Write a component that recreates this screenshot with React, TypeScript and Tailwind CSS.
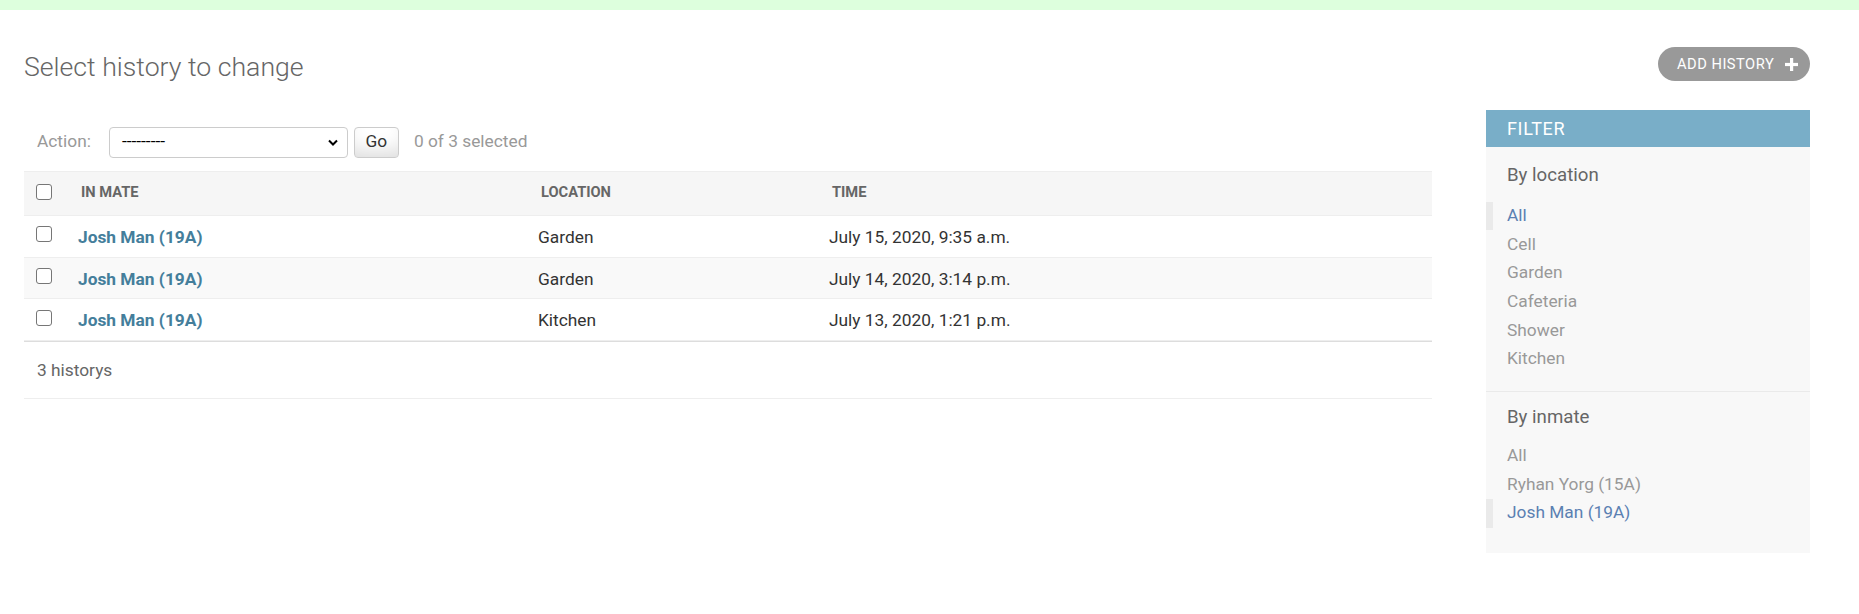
export default function App() {
  const rows = [
    { loc: "Garden", time: "July 15, 2020, 9:35 a.m.", bg: "bg-white" },
    { loc: "Garden", time: "July 14, 2020, 3:14 p.m.", bg: "bg-[#f9f9f9]" },
    { loc: "Kitchen", time: "July 13, 2020, 1:21 p.m.", bg: "bg-white" },
  ];
  const locs = [
    { t: "All", sel: true },
    { t: "Cell", sel: false },
    { t: "Garden", sel: false },
    { t: "Cafeteria", sel: false },
    { t: "Shower", sel: false },
    { t: "Kitchen", sel: false },
  ];
  const inmates = [
    { t: "All", sel: false },
    { t: "Ryhan Yorg (15A)", sel: false },
    { t: "Josh Man (19A)", sel: true },
  ];
  const Check = () => (
    <div className="w-[16px] h-[16px] mb-[4px] rounded-[3px] border border-[#767676] bg-white" />
  );
  const Item = ({ t, sel }: { t: string; sel: boolean }) => (
    <li
      className={
        sel
          ? "h-[28.7px] flex items-center border-l-[7px] border-[#eaeaea] pl-[14px] text-[#5b80b2]"
          : "h-[28.7px] flex items-center pl-[21px] text-[#999]"
      }
    >
      {t}
    </li>
  );
  return (
    <div className="min-h-[614px] bg-white font-['Roboto',sans-serif] text-[#333]">
      <div className="h-[10px] bg-[#ddffdd]" />
      <div className="flex pl-[24px] pr-[49px]">
        <div className="flex-1 min-w-0">
          <h1 className="pt-[41px] text-[26.67px] leading-[32px] font-light text-[#666]">
            Select history to change
          </h1>
          <div className="mt-[30px] h-[58px] flex items-center pl-[13px] text-[17.33px] text-[#999]">
            <span>Action:</span>
            <div className="ml-[18px] w-[239px] h-[31px] border border-[#ccc] rounded-[4px] bg-white flex items-center justify-between pl-[12px] pr-[9px] text-black">
              <span>---------</span>
              <svg width="10" height="7" viewBox="0 0 10 7">
                <path d="M1 1.5 L5 5.5 L9 1.5" fill="none" stroke="#000" strokeWidth="2" />
              </svg>
            </div>
            <div className="ml-[6px] w-[45px] h-[31px] border border-[#ccc] rounded-[4px] bg-white shadow-[inset_0_-15px_20px_-10px_rgba(0,0,0,0.15)] flex items-center justify-center text-[#333]">
              Go
            </div>
            <span className="ml-[15px]">0 of 3 selected</span>
          </div>
          <div className="border-t border-[#eee]">
            <div className="grid grid-cols-[44px_460px_291px_1fr] h-[44px] pb-[3px] bg-[#f6f6f6] border-b border-[#eee] items-center text-[14.67px] font-bold uppercase text-[#666]">
              <div className="pl-[12px] pt-[3px] flex items-center">
                <Check />
              </div>
              <div className="pl-[13px]">In mate</div>
              <div className="pl-[13px]">Location</div>
              <div className="pl-[13px]">Time</div>
            </div>
            {rows.map((r, i) => (
              <div
                key={i}
                className={`grid grid-cols-[44px_460px_291px_1fr] h-[41.7px] ${r.bg} border-b border-[#eee] items-center text-[17.33px]`}
              >
                <div className="pl-[12px] flex items-center">
                  <Check />
                </div>
                <div className="pl-[10px] pt-[3px] font-bold text-[#447e9b]">Josh Man (19A)</div>
                <div className="pl-[10px] pt-[3px]">{r.loc}</div>
                <div className="pl-[10px] pt-[3px]">{r.time}</div>
              </div>
            ))}
          </div>
          <div className="h-[58px] pt-[2px] border-t border-[#ddd] border-b border-b-[#eee] flex items-center pl-[13px] text-[17.33px] text-[#666]">
            3 historys
          </div>
        </div>
        <div className="w-[324px] ml-[54px] flex flex-col">
          <div className="mt-[37px] self-end h-[34px] w-[152px] rounded-full bg-[#999] text-white flex items-center pl-[19px] text-[14.67px] tracking-[0.5px] uppercase">
            <span>Add history</span>
            <svg className="ml-[11px]" width="13" height="13" viewBox="0 0 13 13">
              <rect x="5" y="0" width="3.2" height="13" fill="#fff" />
              <rect x="0" y="4.9" width="13" height="3.2" fill="#fff" />
            </svg>
          </div>
          <div className="mt-[29px] bg-[#f8f8f8]">
            <div className="h-[37px] bg-[#79aec8] text-white flex items-center pl-[21px] text-[18px] tracking-[0.67px] uppercase">
              Filter
            </div>
            <div className="border-b border-[#eaeaea]">
              <h3 className="pt-[16px] pl-[21px] text-[18.67px] leading-[24px] text-[#666]">By location</h3>
              <ul className="mt-[14.5px] pb-[17.5px] text-[17.33px]">
                {locs.map((l) => (
                  <Item key={l.t} t={l.t} sel={l.sel} />
                ))}
              </ul>
            </div>
            <div>
              <h3 className="pt-[13px] pl-[21px] text-[18.67px] leading-[24px] text-[#666]">By inmate</h3>
              <ul className="mt-[12.5px] pb-[25.7px] text-[17.33px]">
                {inmates.map((l) => (
                  <Item key={l.t} t={l.t} sel={l.sel} />
                ))}
              </ul>
            </div>
          </div>
        </div>
      </div>
    </div>
  );
}
